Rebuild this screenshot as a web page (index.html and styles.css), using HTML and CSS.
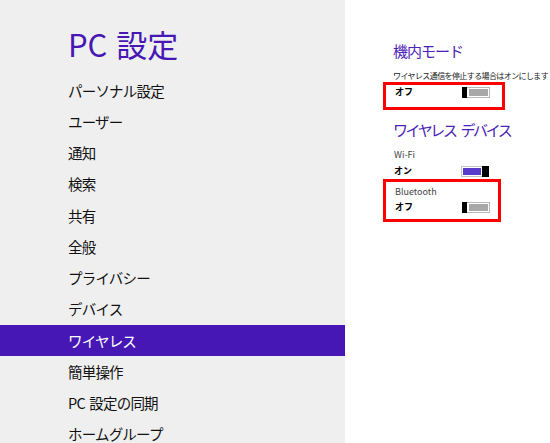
FILE: index.html
```html
<!DOCTYPE html>
<html lang="ja">
<head>
<meta charset="utf-8">
<title>PC 設定</title>
<link rel="stylesheet" href="styles.css">
</head>
<body>
<div class="app">
  <nav class="nav">
    <h1 class="title">PC 設定</h1>
    <ul class="menu">
      <li class="item">パーソナル設定</li>
      <li class="item">ユーザー</li>
      <li class="item">通知</li>
      <li class="item">検索</li>
      <li class="item">共有</li>
      <li class="item">全般</li>
      <li class="item">プライバシー</li>
      <li class="item">デバイス</li>
      <li class="item selected">ワイヤレス</li>
      <li class="item">簡単操作</li>
      <li class="item">PC 設定の同期</li>
      <li class="item">ホームグループ</li>
    </ul>
  </nav>
  <main class="content">
    <h2 class="heading">機内モード</h2>
    <p class="desc">ワイヤレス通信を停止する場合はオンにします</p>
    <div class="mark mark-air">
      <div class="row"><span class="state">オフ</span><span class="toggle off"><span class="track"></span></span></div>
    </div>
    <h2 class="heading heading-dev">ワイヤレス デバイス</h2>
    <p class="label label-wifi">Wi-Fi</p>
    <div class="row row-wifi"><span class="state">オン</span><span class="toggle on"><span class="track"></span></span></div>
    <div class="mark mark-bt">
      <p class="label">Bluetooth</p>
      <div class="row row-bt"><span class="state">オフ</span><span class="toggle off"><span class="track"></span></span></div>
    </div>
  </main>
</div>
</body>
</html>
```
FILE: styles.css
```css
html, body {
  margin: 0;
  padding: 0;
  background: #ffffff;
}
body {
  font-family: "Noto Sans CJK JP", "Noto Sans", sans-serif;
  color: #000;
  width: 550px;
  height: 443px;
  overflow: hidden;
}
.app {
  display: flex;
  height: 443px;
}
.nav {
  width: 345px;
  flex: none;
  background: #efefef;
  padding-top: 26px;
  box-sizing: border-box;
}
.title {
  margin: 0 0 12.5px 68px;
  font-size: 31px;
  line-height: 36px;
  font-weight: 400;
  color: #4617b4;
  letter-spacing: 0;
  word-spacing: 2px;
}
.menu {
  list-style: none;
  margin: 0;
  padding: 0;
}
.item {
  height: 31.25px;
  line-height: 31.25px;
  padding-left: 68px;
  font-size: 14.5px;
  color: #111;
  letter-spacing: -0.8px;
  word-spacing: 2px;
}
.item.selected {
  background: #4617b4;
  color: #fff;
}
.content {
  flex: 1;
  padding-left: 48px;
  padding-top: 41px;
  overflow: hidden;
  white-space: nowrap;
}
.heading {
  margin: 0;
  font-size: 15px;
  line-height: 20px;
  font-weight: 400;
  color: #4a22b8;
  letter-spacing: -1px;
}
.heading-dev {
  margin-top: 10px;
  letter-spacing: -2.4px;
  word-spacing: 4px;
}
.desc {
  margin: 9px 0 0 0;
  font-size: 8px;
  line-height: 12px;
  color: #222;
  letter-spacing: -0.6px;
}
.label {
  margin: 0;
  font-size: 9px;
  line-height: 12px;
  color: #444;
  padding-left: 1px;
}
.label-wifi {
  margin-top: 9px;
}
.row {
  width: 95px;
  height: 12px;
  display: flex;
  justify-content: space-between;
  align-items: center;
  padding-left: 1px;
}
.row-wifi {
  margin-top: 4px;
}
.row-bt {
  margin-top: 3px;
}
.state {
  font-size: 9px;
  line-height: 12px;
  font-weight: 700;
  color: #000;
}
.mark {
  border: 3px solid #ff0000;
  margin-left: -10px;
  padding-left: 8px;
  box-sizing: border-box;
}
.mark-air {
  width: 122px;
  height: 28px;
  padding-top: 1px;
}
.mark-bt {
  width: 118px;
  height: 43px;
  margin-top: 2px;
  padding-top: 4px;
}
.toggle {
  width: 28px;
  height: 11px;
  box-sizing: border-box;
  border: 1px solid #b8b8b8;
  background: #fff;
  padding: 1px;
  display: flex;
  position: relative;
}
.track {
  flex: 1;
}
.toggle.off .track {
  background: #a8a8a8;
  margin-left: 5px;
}
.toggle.off::before {
  content: "";
  position: absolute;
  left: -1px;
  top: -1px;
  width: 5px;
  height: 11px;
  background: #000;
}
.toggle.on {
  border-color: #c4c4c4;
}
.toggle.on .track {
  background: #5a3ccc;
  margin-right: 6px;
}
.toggle.on::after {
  content: "";
  position: absolute;
  right: -1px;
  top: -1px;
  width: 7px;
  height: 11px;
  background: #000;
}
```
